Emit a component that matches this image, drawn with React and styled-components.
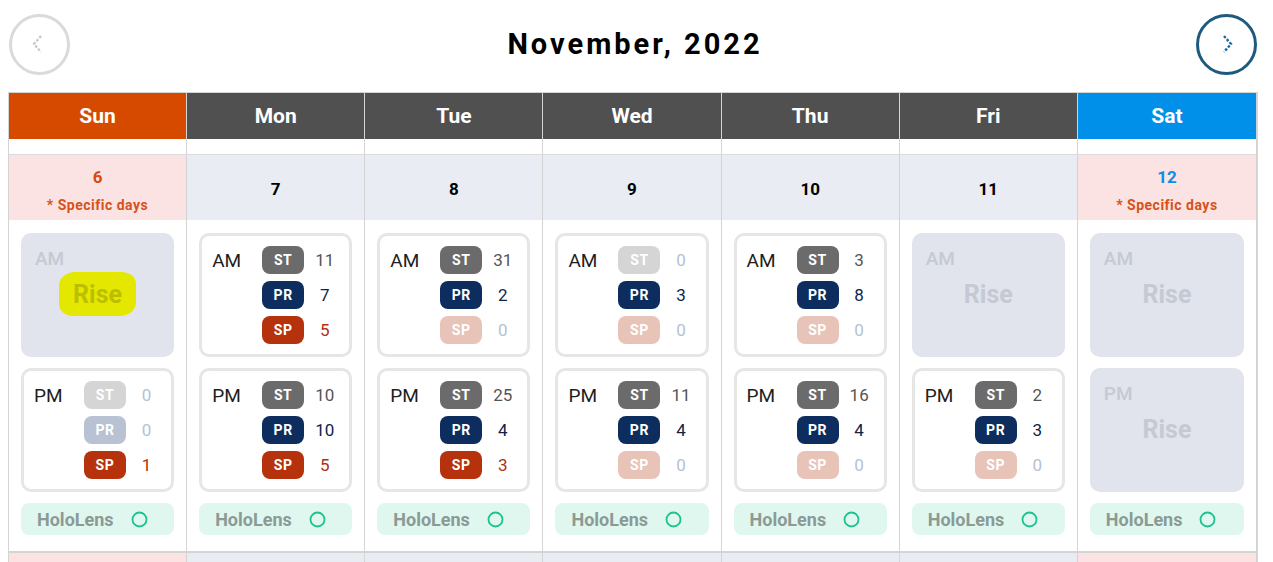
import React from 'react';
import styled, { createGlobalStyle } from 'styled-components';

const GlobalStyle = createGlobalStyle`
  body {
    margin: 8px;
    font-family: Roboto, "Noto Sans", Arial, sans-serif;
    background: #ffffff;
    color: #222222;
  }
  * { box-sizing: border-box; }
`;

const Page = styled.div`
  width: 1250px;
`;

const TopBar = styled.div`
  display: flex;
  align-items: center;
  justify-content: space-between;
  height: 60px;
  margin: 6px 1px 18px 1px;
`;

const NavButton = styled.button`
  width: 61px;
  height: 61px;
  border-radius: 50%;
  background: #ffffff;
  border: ${p => (p.$active ? '3px solid #1d5a7e' : '3px solid #dadada')};
  display: grid;
  place-items: center;
  padding: 0;
  cursor: pointer;
`;

const Title = styled.h1`
  margin: 0 0 0 4px;
  font-size: 29px;
  font-weight: 700;
  letter-spacing: 3px;
  color: #000000;
`;

const Grid = styled.div`
  display: grid;
  grid-template-columns: repeat(7, 1fr);
  border-top: 1px solid #d4d4d4;
  border-left: 1px solid #d4d4d4;
  border-right: 2px solid #d4d4d4;
`;

const HeaderCell = styled.div`
  height: 46px;
  display: flex;
  align-items: center;
  justify-content: center;
  font-size: 21px;
  font-weight: 700;
  color: #ffffff;
  background: ${p => p.$bg};
  border-right: ${p => (p.$last ? 'none' : '1px solid #d4d4d4')};
`;

const SpacerCell = styled.div`
  height: 16px;
  border-right: ${p => (p.$last ? 'none' : '1px solid #d4d4d4')};
  border-bottom: 1px solid #dcdcdc;
`;

const DateCell = styled.div`
  height: 65px;
  display: flex;
  flex-direction: column;
  align-items: center;
  justify-content: center;
  gap: 8px;
  padding-top: 3px;
  background: ${p => (p.$weekend ? '#fbe3e3' : '#e9ecf3')};
  border-right: ${p => (p.$last ? 'none' : '1px solid #d4d4d4')};
`;

const DateNumber = styled.div`
  font-size: 17px;
  line-height: 24px;
  font-weight: 700;
  color: ${p => p.$color || '#000000'};
`;

const SpecificNote = styled.div`
  font-size: 14px;
  line-height: 16px;
  font-weight: 700;
  letter-spacing: 0.5px;
  color: #d6521a;
`;

const BodyCell = styled.div`
  display: flex;
  flex-direction: column;
  gap: 11px;
  padding: 13px 12px 16px 12px;
  border-right: ${p => (p.$last ? 'none' : '1px solid #d4d4d4')};
  border-bottom: 2px solid #d4d4d4;
`;

const SessionCard = styled.div`
  height: 124px;
  border-radius: 10px;
  border: 3px solid #e6e6e6;
  background: #ffffff;
  display: grid;
  grid-template-columns: 50px 42px 1fr;
  grid-auto-rows: 28px;
  row-gap: 7px;
  padding: 10px 4px 10px 10px;
  align-items: center;
`;

const SessionLabel = styled.div`
  grid-column: 1;
  grid-row: 1;
  font-size: 19px;
  color: #1e1e1e;
`;

const Badge = styled.div`
  grid-column: 2;
  height: 28px;
  border-radius: 8px;
  display: flex;
  align-items: center;
  justify-content: center;
  font-size: 14px;
  font-weight: 700;
  letter-spacing: 0.6px;
  color: #ffffff;
  background: ${p => p.$bg};
`;

const Count = styled.div`
  grid-column: 3;
  text-align: center;
  font-size: 17px;
  color: ${p => p.$color};
`;

const RiseCard = styled.div`
  height: 124px;
  border-radius: 10px;
  background: #e1e4ec;
  padding: 15px 14px;
  display: flex;
  flex-direction: column;
`;

const RiseLabel = styled.div`
  font-size: 19px;
  line-height: 22px;
  font-weight: 500;
  color: #c5c9d3;
`;

const RiseText = styled.div`
  margin-top: 10px;
  text-align: center;
  font-size: 25px;
  line-height: 30px;
  font-weight: 700;
  color: #c5c9d3;
`;

const Highlight = styled.span`
  display: inline-block;
  background: #e4e800;
  color: #bcbe00;
  border-radius: 14px 12px 14px 12px;
  padding: 8px 12px 6px;
  margin: -8px 0 -6px;
  box-shadow: -3px 0 0 -1px #e4e800, 3px 0 0 -1px #e4e800;
`;

const DeviceBar = styled.div`
  height: 32px;
  border-radius: 8px;
  background: #e0f7f0;
  display: flex;
  align-items: center;
  gap: 17px;
  padding-left: 16px;
  font-size: 18px;
  font-weight: 700;
  color: #8b9a95;
`;

const HEADERS = [
  { name: 'Sun', bg: '#d64a00' },
  { name: 'Mon', bg: '#505050' },
  { name: 'Tue', bg: '#505050' },
  { name: 'Wed', bg: '#505050' },
  { name: 'Thu', bg: '#505050' },
  { name: 'Fri', bg: '#505050' },
  { name: 'Sat', bg: '#0090e9' },
];

const KINDS = [
  { key: 'ST', on: '#6b6b6b', off: '#d5d5d5', text: '#555555' },
  { key: 'PR', on: '#0c2d5d', off: '#b8c2d2', text: '#0d2448' },
  { key: 'SP', on: '#b5320c', off: '#e8c3b8', text: '#b0300f' },
];

const DAYS = [
  { date: 6, special: true, color: '#d44a10', am: null, highlight: true, pm: [0, 0, 1] },
  { date: 7, am: [11, 7, 5], pm: [10, 10, 5] },
  { date: 8, am: [31, 2, 0], pm: [25, 4, 3] },
  { date: 9, am: [0, 3, 0], pm: [11, 4, 0] },
  { date: 10, am: [3, 8, 0], pm: [16, 4, 0] },
  { date: 11, am: null, pm: [2, 3, 0] },
  { date: 12, special: true, color: '#0a8ee8', am: null, pm: null },
];

const ChevronLeft = () => (
  <svg width="14" height="20" viewBox="0 0 14 20" style={{ marginLeft: -4 }}>
    <polyline points="10,2 3,10 10,18" fill="none" stroke="#c6c6c6" strokeWidth="2.2" strokeDasharray="2.6 1.6" />
  </svg>
);

const ChevronRight = () => (
  <svg width="14" height="20" viewBox="0 0 14 20" style={{ marginLeft: 2 }}>
    <polyline points="4,2 11,10 4,18" fill="none" stroke="#1a6d9c" strokeWidth="2.4" strokeDasharray="2.6 1.6" />
  </svg>
);

const Session = ({ label, counts, highlight }) => {
  if (!counts) {
    return (
      <RiseCard>
        <RiseLabel>{label}</RiseLabel>
        <RiseText>{highlight ? <Highlight>Rise</Highlight> : 'Rise'}</RiseText>
      </RiseCard>
    );
  }
  return (
    <SessionCard>
      <SessionLabel>{label}</SessionLabel>
      {KINDS.map((k, i) => (
        <React.Fragment key={k.key}>
          <Badge style={{ gridRow: i + 1 }} $bg={counts[i] > 0 ? k.on : k.off}>{k.key}</Badge>
          <Count style={{ gridRow: i + 1 }} $color={counts[i] > 0 ? k.text : '#b5c1d3'}>{counts[i]}</Count>
        </React.Fragment>
      ))}
    </SessionCard>
  );
};

export default function App() {
  return (
    <Page>
      <GlobalStyle />
      <TopBar>
        <NavButton aria-label="Previous month"><ChevronLeft /></NavButton>
        <Title>November, 2022</Title>
        <NavButton $active aria-label="Next month"><ChevronRight /></NavButton>
      </TopBar>
      <Grid>
        {HEADERS.map((h, i) => (
          <HeaderCell key={h.name} $bg={h.bg} $last={i === 6}>{h.name}</HeaderCell>
        ))}
        {HEADERS.map((h, i) => (
          <SpacerCell key={'s' + h.name} $last={i === 6} />
        ))}
        {DAYS.map((d, i) => (
          <DateCell key={'d' + d.date} $weekend={i === 0 || i === 6} $last={i === 6}>
            <DateNumber $color={d.color}>{d.date}</DateNumber>
            {d.special && <SpecificNote>* Specific days</SpecificNote>}
          </DateCell>
        ))}
        {DAYS.map((d, i) => (
          <BodyCell key={'b' + d.date} $last={i === 6}>
            <Session label="AM" counts={d.am} highlight={d.highlight} />
            <Session label="PM" counts={d.pm} />
            <DeviceBar>
              HoloLens
              <svg width="17" height="17" viewBox="0 0 17 17">
                <circle cx="8.5" cy="8.5" r="7" fill="none" stroke="#1fc18f" strokeWidth="1.8" />
              </svg>
            </DeviceBar>
          </BodyCell>
        ))}
        {HEADERS.map((h, i) => (
          <DateCell key={'n' + h.name} $weekend={i === 0 || i === 6} $last={i === 6} />
        ))}
      </Grid>
    </Page>
  );
}
